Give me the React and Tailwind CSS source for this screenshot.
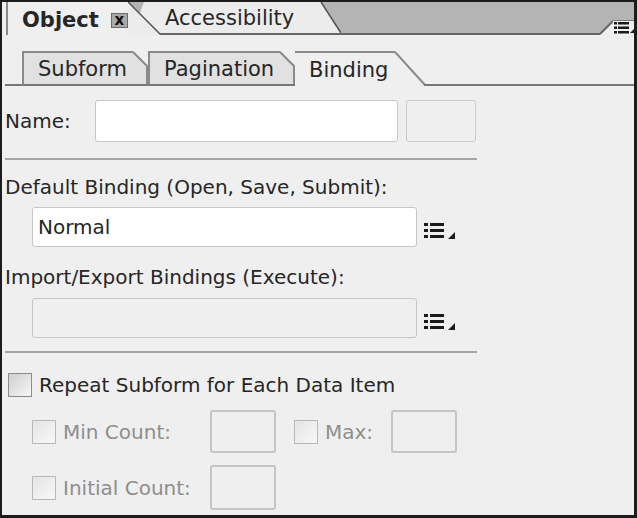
import React from "react";

const ListIcon = () => (
  <svg width="32" height="18" viewBox="0 0 32 18" className="shrink-0">
    <rect x="0" y="1" width="4" height="3" fill="#1a1a1a" />
    <rect x="6" y="1" width="14" height="3" fill="#1a1a1a" />
    <rect x="0" y="7" width="4" height="3" fill="#1a1a1a" />
    <rect x="6" y="7" width="14" height="3" fill="#1a1a1a" />
    <rect x="0" y="13" width="4" height="3" fill="#1a1a1a" />
    <rect x="6" y="13" width="14" height="3" fill="#1a1a1a" />
    <polygon points="31,10 31,17 24,17" fill="#1a1a1a" />
  </svg>
);

const Check = ({ disabled }) => (
  <div
    className={`shrink-0 w-[24px] h-[24px] border ${
      disabled ? "border-[#b8b8b8] bg-gradient-to-br from-[#e4e4e4] to-[#f8f8f8]" : "border-[#8c8c8c] bg-gradient-to-br from-[#cfcfcf] to-[#f6f6f6]"
    }`}
  />
);

// inactive sub tab: body + slanted ear on the right
const SubTab = ({ label, width }) => (
  <div className="flex h-[35px]">
    <div className={`${width} h-full bg-[#e1e1e1] border-l-2 border-t-2 border-b-2 border-l-[#8a8a8a] border-t-[#8a8a8a] border-b-[#777] pl-[14px] pt-[3px] flex items-center`}>
      {label}
    </div>
    <svg width="15" height="35" viewBox="0 0 15 35" className="shrink-0">
      <polygon points="0,0 14,14 14,35 0,35" fill="#e1e1e1" />
      <polyline points="0,1 14,15 14,35" fill="none" stroke="#8a8a8a" strokeWidth="2" />
      <rect x="0" y="33" width="15" height="2" fill="#777" />
    </svg>
  </div>
);

export default function App() {
  return (
    <div className="w-[637px] h-[518px] bg-[#efefef] border-t-2 border-l-2 border-r-[3px] border-b-[3px] border-[#1c1c1c] flex flex-col overflow-hidden font-['DejaVu_Sans',sans-serif] text-[#262626]">
      {/* top panel tabs */}
      <div className="flex h-[33px] shrink-0 bg-[#b4b4b4]">
        <div className="w-[4px] bg-[#efefef]" />
        <div className="w-[122px] bg-[#efefef] border-l-2 border-[#8a8a8a] pl-[14px] pt-[3px] flex items-center">
          <span className="font-bold text-[21px] leading-none">Object</span>
          <span className="ml-[12px] w-[18px] h-[15px] bg-[#a9a9a9] border border-[#6a6a6a] flex items-center justify-center text-[15px] font-bold leading-none text-[#111]">x</span>
        </div>
        <svg width="34" height="33" viewBox="0 0 34 33" className="shrink-0">
          <rect width="34" height="33" fill="#ececec" />
          <polygon points="0,0 16,0 12,11" fill="#b4b4b4" />
          <line x1="0" y1="0" x2="33" y2="33" stroke="#555" strokeWidth="1.5" />
          <rect x="32" y="31" width="2" height="2" fill="#666" />
        </svg>
        <div className="w-[157px] bg-[#ececec] border-b-2 border-[#666] pl-[3px] pt-[3px] flex items-center text-[21px]">Accessibility</div>
        <svg width="22" height="33" viewBox="0 0 22 33" className="shrink-0">
          <polygon points="0,0 2,0 22,31 0,31" fill="#ececec" />
          <line x1="2" y1="0" x2="22" y2="31" stroke="#555" strokeWidth="1.5" />
          <rect x="0" y="31" width="22" height="2" fill="#666" />
        </svg>
        <div className="flex-1 border-b-2 border-[#666]" />
        <svg width="13" height="33" viewBox="0 0 13 33" className="shrink-0">
          <polygon points="0,33 13,19 13,33" fill="#efefef" />
          <line x1="0" y1="32" x2="13" y2="19" stroke="#666" strokeWidth="2" />
        </svg>
        <div className="w-[21px] flex flex-col">
          <div className="h-[19px] border-b border-[#777]" />
          <div className="flex-1 bg-[#efefef] pl-[1px] pt-[1px] overflow-hidden">
            <svg width="24" height="12" viewBox="0 0 24 12">
              <rect x="0" y="0" width="3" height="2.5" fill="#1a1a1a" />
              <rect x="4" y="0" width="11" height="2.5" fill="#1a1a1a" />
              <rect x="0" y="4.5" width="3" height="2.5" fill="#1a1a1a" />
              <rect x="4" y="4.5" width="11" height="2.5" fill="#1a1a1a" />
              <rect x="0" y="9" width="3" height="2.5" fill="#1a1a1a" />
              <rect x="4" y="9" width="11" height="2.5" fill="#1a1a1a" />
              <polygon points="22,5 22,11 16,11" fill="#1a1a1a" />
            </svg>
          </div>
        </div>
      </div>

      {/* sub tabs */}
      <div className="flex items-end h-[51px] shrink-0 text-[21px]">
        <div className="ml-[3px] w-[17px] border-b-2 border-[#777]" />
        <SubTab label="Subform" width="w-[111px]" />
        <SubTab label="Pagination" width="w-[132px]" />
        <div className="flex h-[35px]">
          <div className="w-[100px] h-full border-t-2 border-[#8a8a8a] pl-[14px] pt-[3px] flex items-center">Binding</div>
          <svg width="31" height="35" viewBox="0 0 31 35" className="shrink-0">
            <line x1="0" y1="1" x2="30" y2="34" stroke="#8a8a8a" strokeWidth="2" />
            <rect x="29" y="33" width="2" height="2" fill="#777" />
          </svg>
        </div>
        <div className="flex-1 border-b-2 border-[#777]" />
      </div>

      {/* content */}
      <div className="pl-[3px] flex flex-col text-[20px] leading-[26px]">
        <div className="flex items-center mt-[14px]">
          <span className="w-[90px]">Name:</span>
          <div className="w-[303px] h-[42px] bg-white border border-[#c6c6c6] rounded-[3px]" />
          <div className="ml-[8px] w-[70px] h-[42px] border border-[#cacaca] rounded-[3px]" />
        </div>
        <div className="mt-[16px] w-[472px] h-[2px] bg-[#a6a6a6]" />

        <div className="mt-[14px]">Default Binding (Open, Save, Submit):</div>
        <div className="flex items-center mt-[7px] ml-[27px]">
          <div className="w-[385px] h-[40px] bg-white border border-[#c6c6c6] rounded-[3px] pl-[5px] flex items-center">Normal</div>
          <div className="ml-[7px] mt-[8px]"><ListIcon /></div>
        </div>

        <div className="mt-[17px]">Import/Export Bindings (Execute):</div>
        <div className="flex items-center mt-[8px] ml-[27px]">
          <div className="w-[385px] h-[40px] border border-[#c6c6c6] rounded-[3px]" />
          <div className="ml-[7px] mt-[8px]"><ListIcon /></div>
        </div>
        <div className="mt-[13px] w-[472px] h-[2px] bg-[#a6a6a6]" />

        <div className="flex items-center mt-[19px] ml-[3px]">
          <Check />
          <span className="ml-[7px]">Repeat Subform for Each Data Item</span>
        </div>

        <div className="flex items-center mt-[12px] ml-[27px] text-[#8e8e8e]">
          <Check disabled />
          <span className="ml-[7px] w-[147px]">Min Count:</span>
          <div className="w-[66px] h-[43px] border-2 border-[#c4c4c4] rounded-[3px]" />
          <div className="ml-[18px]"><Check disabled /></div>
          <span className="ml-[7px] w-[66px]">Max:</span>
          <div className="w-[66px] h-[43px] border-2 border-[#c4c4c4] rounded-[3px]" />
        </div>

        <div className="flex items-center mt-[12px] ml-[27px] text-[#8e8e8e]">
          <Check disabled />
          <span className="ml-[7px] w-[147px]">Initial Count:</span>
          <div className="w-[66px] h-[45px] border-2 border-[#c4c4c4] rounded-[3px]" />
        </div>
      </div>
    </div>
  );
}
